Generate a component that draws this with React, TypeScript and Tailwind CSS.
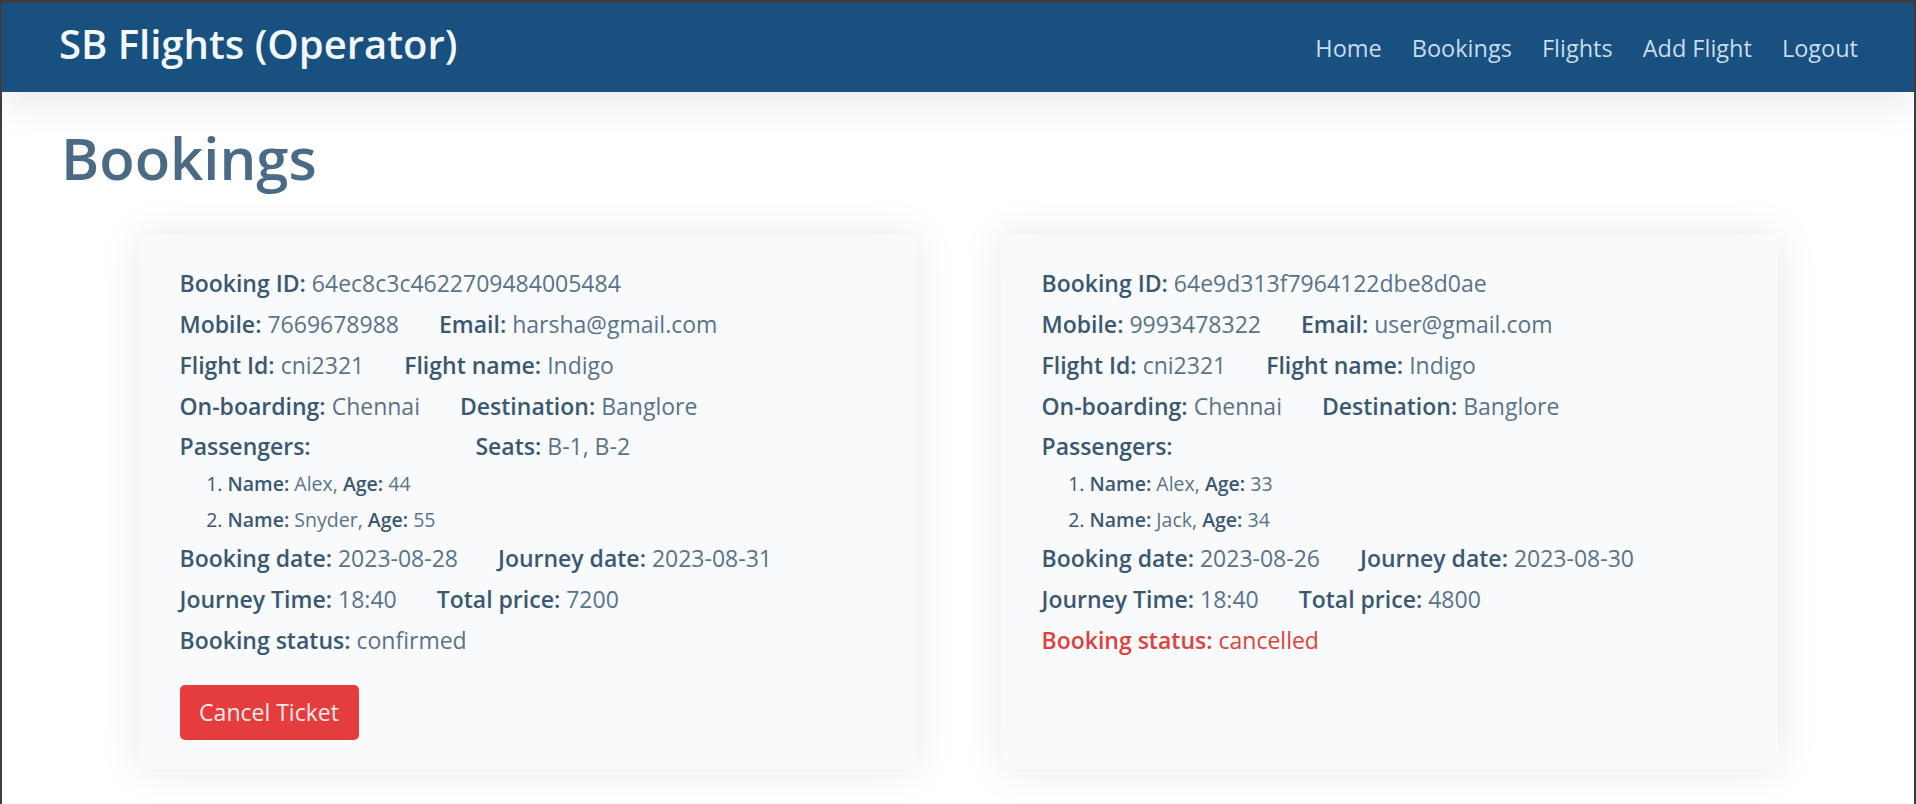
import React from "react";

type Field = { label: string; value: string };

function F({ label, value, red }: Field & { red?: boolean }) {
  return (
    <span className={red ? "text-[#e0413d]" : ""}>
      <span className={red ? "font-semibold" : "font-semibold text-[#3b5872]"}>{label}:</span>{" "}
      <span className={red ? "" : "text-[#5a7389]"}>{value}</span>
    </span>
  );
}

type Booking = {
  id: string;
  mobile: string;
  email: string;
  flightId: string;
  flightName: string;
  from: string;
  to: string;
  passengers: { name: string; age: number }[];
  seats?: string;
  bookingDate: string;
  journeyDate: string;
  time: string;
  price: string;
  status: string;
};

const bookings: Booking[] = [
  {
    id: "64ec8c3c4622709484005484",
    mobile: "7669678988",
    email: "harsha@gmail.com",
    flightId: "cni2321",
    flightName: "Indigo",
    from: "Chennai",
    to: "Banglore",
    passengers: [
      { name: "Alex", age: 44 },
      { name: "Snyder", age: 55 },
    ],
    seats: "B-1, B-2",
    bookingDate: "2023-08-28",
    journeyDate: "2023-08-31",
    time: "18:40",
    price: "7200",
    status: "confirmed",
  },
  {
    id: "64e9d313f7964122dbe8d0ae",
    mobile: "9993478322",
    email: "user@gmail.com",
    flightId: "cni2321",
    flightName: "Indigo",
    from: "Chennai",
    to: "Banglore",
    passengers: [
      { name: "Alex", age: 33 },
      { name: "Jack", age: 34 },
    ],
    bookingDate: "2023-08-26",
    journeyDate: "2023-08-30",
    time: "18:40",
    price: "4800",
    status: "cancelled",
  },
];

function Card({ b }: { b: Booking }) {
  const cancelled = b.status === "cancelled";
  return (
    <div className="w-[777px] rounded-md bg-[#f8fafb] pl-[41px] pr-6 pt-[28px] pb-[29px] shadow-[0_0_45px_rgba(0,0,0,0.09)] text-[23px] leading-[41px]">
      <div className="flex gap-10">
        <F label="Booking ID" value={b.id} />
      </div>
      <div className="flex gap-10">
        <F label="Mobile" value={b.mobile} />
        <F label="Email" value={b.email} />
      </div>
      <div className="flex gap-10">
        <F label="Flight Id" value={b.flightId} />
        <F label="Flight name" value={b.flightName} />
      </div>
      <div className="flex gap-10">
        <F label="On-boarding" value={b.from} />
        <F label="Destination" value={b.to} />
      </div>
      <div className="flex gap-10 items-start">
        <div>
          <div className="font-semibold text-[#3b5872] leading-[39px]">Passengers:</div>
          <ol className="list-decimal pl-[48px] text-[19.5px] leading-[36px] text-[#3b5872]">
            {b.passengers.map((p, i) => (
              <li key={i}>
                <span className="font-semibold">Name:</span>{" "}
                <span className="text-[#5a7389]">{p.name},</span>{" "}
                <span className="font-semibold">Age:</span>{" "}
                <span className="text-[#5a7389]">{p.age}</span>
              </li>
            ))}
          </ol>
        </div>
        {b.seats && (
          <div className="leading-[39px]">
            <F label="Seats" value={b.seats} />
          </div>
        )}
      </div>
      <div className="flex gap-10">
        <F label="Booking date" value={b.bookingDate} />
        <F label="Journey date" value={b.journeyDate} />
      </div>
      <div className="flex gap-10">
        <F label="Journey Time" value={b.time} />
        <F label="Total price" value={b.price} />
      </div>
      <div className="flex gap-10">
        <F label="Booking status" value={b.status} red={cancelled} />
      </div>
      {!cancelled && (
        <button className="mt-6 h-[55px] w-[179px] rounded-[5px] bg-[#e53d3d] text-[23px] text-[#fbeaea] leading-none">
          Cancel Ticket
        </button>
      )}
    </div>
  );
}

export default function App() {
  return (
    <div
      className="min-h-[804px] bg-white border-x-2 border-t-[3px] border-[#3a3d42] overflow-hidden"
      style={{ fontFamily: '"Open Sans", "Noto Sans", sans-serif' }}
    >
      <nav className="h-[89px] bg-[#18507f] flex items-center justify-between pl-[57px] pr-[56px] shadow-[0_12px_40px_rgba(0,0,0,0.09)] relative">
        <div className="text-[40px] font-semibold text-[#f2f7fb] -mt-[8px]">SB Flights (Operator)</div>
        <div className="flex gap-[30px] text-[23.5px] text-[#c9dcee] mt-[2px]">
          <span>Home</span>
          <span>Bookings</span>
          <span>Flights</span>
          <span>Add Flight</span>
          <span>Logout</span>
        </div>
      </nav>
      <h2 className="pl-[59px] pt-[31px] text-[58px] font-semibold text-[#4a6a86] leading-[70px]">Bookings</h2>
      <div className="flex justify-center gap-[85px] mt-[42px]">
        {bookings.map((b) => (
          <Card key={b.id} b={b} />
        ))}
      </div>
    </div>
  );
}
